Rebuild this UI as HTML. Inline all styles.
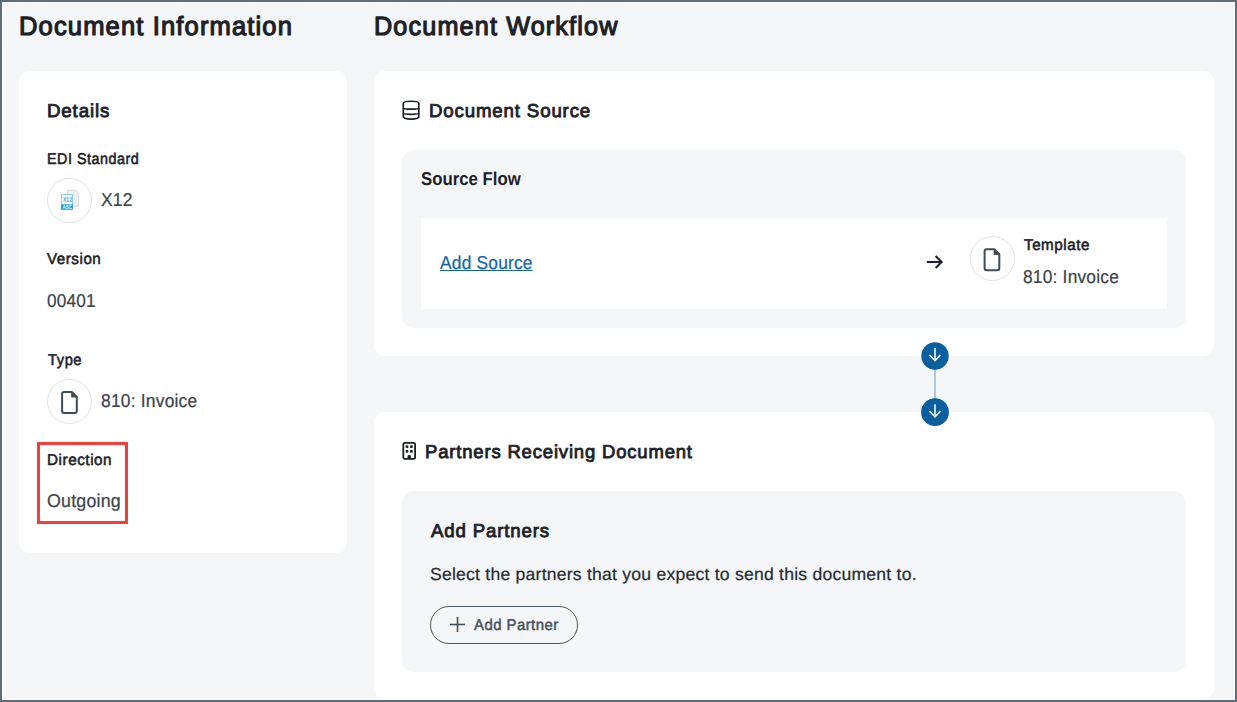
<!DOCTYPE html>
<html><head><meta charset="utf-8">
<style>
*{margin:0;padding:0;box-sizing:border-box}
html,body{width:1237px;height:702px;overflow:hidden}
body{font-family:"Liberation Sans",sans-serif;background:#5d6d7a;position:relative}
#frame{position:absolute;left:2px;top:2px;width:1233px;height:698px;background:#fff;overflow:hidden}
#page{position:absolute;left:1px;top:1px;right:1px;bottom:1px;background:#f5f6f8;overflow:hidden}
#c{position:absolute;left:-3px;top:-3px;width:1237px;height:702px}
.t{position:absolute;white-space:nowrap;line-height:1;transform-origin:0 0;text-rendering:geometricPrecision}
.b{position:absolute}
.card{position:absolute;background:#fff;border-radius:11px}
.inner{position:absolute;background:#f5f6f8;border-radius:12px}
.circ{position:absolute;width:45px;height:45px;border-radius:50%;border:1px solid #dde3e8;background:#fff}
svg{position:absolute;left:0;top:0;overflow:visible}
</style></head>
<body>
<div id="frame"><div id="page"><div id="c">
<div class="card" style="left:19px;top:71px;width:328px;height:482px"></div>
<div class="card" style="left:374px;top:71px;width:840px;height:285px"></div>
<div class="card" style="left:374px;top:412px;width:840px;height:287px"></div>
<div class="inner" style="left:402px;top:150px;width:784px;height:178px"></div>
<div class="b" style="left:421px;top:218px;width:746px;height:91px;background:#fff"></div>
<div class="inner" style="left:402px;top:491px;width:784px;height:181px"></div>
<div class="circ" style="left:47px;top:178px"></div>
<div class="circ" style="left:47px;top:379px"></div>
<div class="circ" style="left:970px;top:236px"></div>
<div class="b" style="left:37px;top:442px;width:91px;height:82px;border:3px solid #fb3a3a"></div>
<div class="b" style="left:430px;top:606px;width:148px;height:38px;border:1px solid #4a5661;border-radius:19px"></div>
<svg width="1237" height="702" viewBox="0 0 1237 702">
 <!-- X12 icon -->
 <path d="M67.5 190.3 H75.5 L78.5 193.3 V206.2 H67.5 Z" fill="#eef0f2" stroke="#d5dae0" stroke-width="1"/>
 <rect x="61.5" y="194.5" width="11" height="14.7" fill="#fff" stroke="#8ccdf0" stroke-width="1"/>
 <rect x="61" y="204.3" width="12" height="5.4" fill="#1e9bdb"/>
 <text x="63" y="202" font-size="7" textLength="9" lengthAdjust="spacingAndGlyphs" font-family="Liberation Sans" fill="#3aa6df" font-weight="bold">X12</text>
 <text x="62.5" y="208.8" font-size="4.5" textLength="9.5" lengthAdjust="spacingAndGlyphs" font-family="Liberation Sans" fill="#e8f5fc" font-weight="bold">ASC</text>
 <!-- file icon 1 -->
 <g transform="translate(61,391)">
  <path d="M3.1 1 H10.8 L15.8 6 V20 Q15.8 22 13.8 22 H3.1 Q1.1 22 1.1 20 V3 Q1.1 1 3.1 1 Z" fill="none" stroke="#3e4c58" stroke-width="2" stroke-linejoin="round"/>
  <path d="M10.2 0.2 L16.6 6.6 H10.2 Z" fill="#3e4c58"/>
 </g>
 <g transform="translate(983.5,248.3)">
  <path d="M3.1 1 H10.8 L15.8 6 V20 Q15.8 22 13.8 22 H3.1 Q1.1 22 1.1 20 V3 Q1.1 1 3.1 1 Z" fill="none" stroke="#3e4c58" stroke-width="2" stroke-linejoin="round"/>
  <path d="M10.2 0.2 L16.6 6.6 H10.2 Z" fill="#3e4c58"/>
 </g>
 <!-- DB icon -->
 <g transform="translate(402,100)" fill="none" stroke="#1c2127" stroke-width="1.7">
  <path d="M1.3 16.8 V3.5 C1.3 0.5 16.8 0.5 16.8 3.5 V16.8 C16.8 19.8 1.3 19.8 1.3 16.8 Z"/>
  <path d="M1.3 8 C1.3 9.6 16.8 9.6 16.8 8"/>
  <path d="M1.3 13.3 C1.3 14.6 16.8 14.6 16.8 13.3"/>
 </g>
 <!-- right arrow -->
 <g fill="none" stroke="#1c2127" stroke-width="2.1">
  <path d="M926.8 262 H941.5"/>
  <path d="M935.6 256 L941.6 262 L935.6 268"/>
 </g>
 <!-- connector -->
 <rect x="934" y="366" width="2" height="36" fill="#a8c9e0"/>
 <circle cx="935" cy="356" r="13.7" fill="#0a5f9c"/>
 <circle cx="935" cy="412.2" r="13.9" fill="#0a5f9c"/>
 <g fill="none" stroke="#fff" stroke-width="1.5">
  <path d="M935 348 V360.8"/>
  <path d="M929.6 355 L935 360.6 L940.4 355"/>
  <path d="M935 404.2 V417"/>
  <path d="M929.6 411.2 L935 416.8 L940.4 411.2"/>
 </g>
 <!-- building icon -->
 <g transform="translate(402,442)">
  <rect x="1.3" y="0.9" width="11.8" height="16" rx="1.6" fill="none" stroke="#1c2127" stroke-width="1.8"/>
  <rect x="3.7" y="3.3" width="2.6" height="2.6" fill="#1c2127"/>
  <rect x="8.1" y="3.3" width="2.6" height="2.6" fill="#1c2127"/>
  <rect x="3.7" y="8" width="2.6" height="2.6" fill="#1c2127"/>
  <rect x="8.1" y="8" width="2.6" height="2.6" fill="#1c2127"/>
  <path d="M5.5 17 V14.4 Q5.5 12.7 7.2 12.7 Q8.9 12.7 8.9 14.4 V17 Z" fill="#1c2127"/>
 </g>
 <!-- plus -->
 <g stroke="#45505b" stroke-width="1.6">
  <path d="M450 624.5 H465"/>
  <path d="M457.5 617 V632"/>
 </g>
</svg>
<div class="t" style="left:18.86px;top:13.0px;font-size:26.3px;font-weight:400;color:#1c2127;transform:scale(0.9705,1);-webkit-text-stroke:1.183px #1c2127;letter-spacing:1.183px;">Document Information</div>
<div class="t" style="left:374.08px;top:13.0px;font-size:26.3px;font-weight:400;color:#1c2127;transform:scale(0.9591,1);-webkit-text-stroke:1.183px #1c2127;letter-spacing:1.183px;">Document Workflow</div>
<div class="t" style="left:47.1px;top:101.8px;font-size:18.7px;font-weight:400;color:#1c2127;transform:scale(1.0016,1);-webkit-text-stroke:0.841px #1c2127;letter-spacing:0.841px;">Details</div>
<div class="t" style="left:46.98px;top:151.7px;font-size:15.6px;font-weight:400;color:#1c2127;transform:scale(0.9194,1);-webkit-text-stroke:0.562px #1c2127;letter-spacing:0.562px;">EDI Standard</div>
<div class="t" style="left:101.06px;top:191.0px;font-size:18.6px;font-weight:400;color:#3b434b;transform:scale(0.9375,1);-webkit-text-stroke:0.223px #3b434b;letter-spacing:0.223px;">X12</div>
<div class="t" style="left:47.4px;top:251.9px;font-size:15.6px;font-weight:400;color:#1c2127;transform:scale(0.9709,1);-webkit-text-stroke:0.562px #1c2127;letter-spacing:0.562px;">Version</div>
<div class="t" style="left:46.77px;top:291.7px;font-size:18.6px;font-weight:400;color:#3b434b;transform:scale(0.9255,1);-webkit-text-stroke:0.223px #3b434b;letter-spacing:0.223px;">00401</div>
<div class="t" style="left:47.6px;top:352.6px;font-size:15.6px;font-weight:400;color:#1c2127;transform:scale(0.9457,1);-webkit-text-stroke:0.562px #1c2127;letter-spacing:0.562px;">Type</div>
<div class="t" style="left:100.86px;top:391.8px;font-size:18.6px;font-weight:400;color:#3b434b;transform:scale(0.9366,1);-webkit-text-stroke:0.223px #3b434b;letter-spacing:0.223px;">810: Invoice</div>
<div class="t" style="left:46.62px;top:452.5px;font-size:15.6px;font-weight:400;color:#1c2127;transform:scale(0.9781,1);-webkit-text-stroke:0.562px #1c2127;letter-spacing:0.562px;">Direction</div>
<div class="t" style="left:46.64px;top:492.4px;font-size:18.6px;font-weight:400;color:#3b434b;transform:scale(0.956,1);-webkit-text-stroke:0.223px #3b434b;letter-spacing:0.223px;">Outgoing</div>
<div class="t" style="left:429.3px;top:101.5px;font-size:18.7px;font-weight:400;color:#1c2127;transform:scale(0.9994,1);-webkit-text-stroke:0.841px #1c2127;letter-spacing:0.841px;">Document Source</div>
<div class="t" style="left:421.0px;top:169.6px;font-size:18.6px;font-weight:700;color:#1c2127;transform:scale(0.9018,1);">Source Flow</div>
<div class="t" style="left:440.1px;top:253.8px;font-size:18.6px;font-weight:400;color:#1464a5;transform:scale(0.9327,1);-webkit-text-stroke:0.223px #1464a5;letter-spacing:0.223px;text-decoration:underline;text-decoration-thickness:1px;text-underline-offset:1px;">Add Source</div>
<div class="t" style="left:1024.4px;top:237.9px;font-size:15.6px;font-weight:400;color:#1c2127;transform:scale(0.9731,1);-webkit-text-stroke:0.562px #1c2127;letter-spacing:0.562px;">Template</div>
<div class="t" style="left:1023.47px;top:267.8px;font-size:18.6px;font-weight:400;color:#3b434b;transform:scale(0.9327,1);-webkit-text-stroke:0.223px #3b434b;letter-spacing:0.223px;">810: Invoice</div>
<div class="t" style="left:425.31px;top:442.7px;font-size:18.7px;font-weight:400;color:#1c2127;transform:scale(0.9885,1);-webkit-text-stroke:0.841px #1c2127;letter-spacing:0.841px;">Partners Receiving Document</div>
<div class="t" style="left:431.0px;top:521.7px;font-size:18.7px;font-weight:400;color:#1c2127;transform:scale(0.9975,1);-webkit-text-stroke:0.841px #1c2127;letter-spacing:0.841px;">Add Partners</div>
<div class="t" style="left:429.69px;top:565.9px;font-size:17.4px;font-weight:400;color:#252b31;transform:scale(1.0128,1);-webkit-text-stroke:0.209px #252b31;letter-spacing:0.209px;">Select the partners that you expect to send this document to.</div>
<div class="t" style="left:474.2px;top:617.8px;font-size:15.6px;font-weight:400;color:#45505b;transform:scale(0.958,1);-webkit-text-stroke:0.468px #45505b;letter-spacing:0.468px;">Add Partner</div>
</div></div></div>
</body></html>
